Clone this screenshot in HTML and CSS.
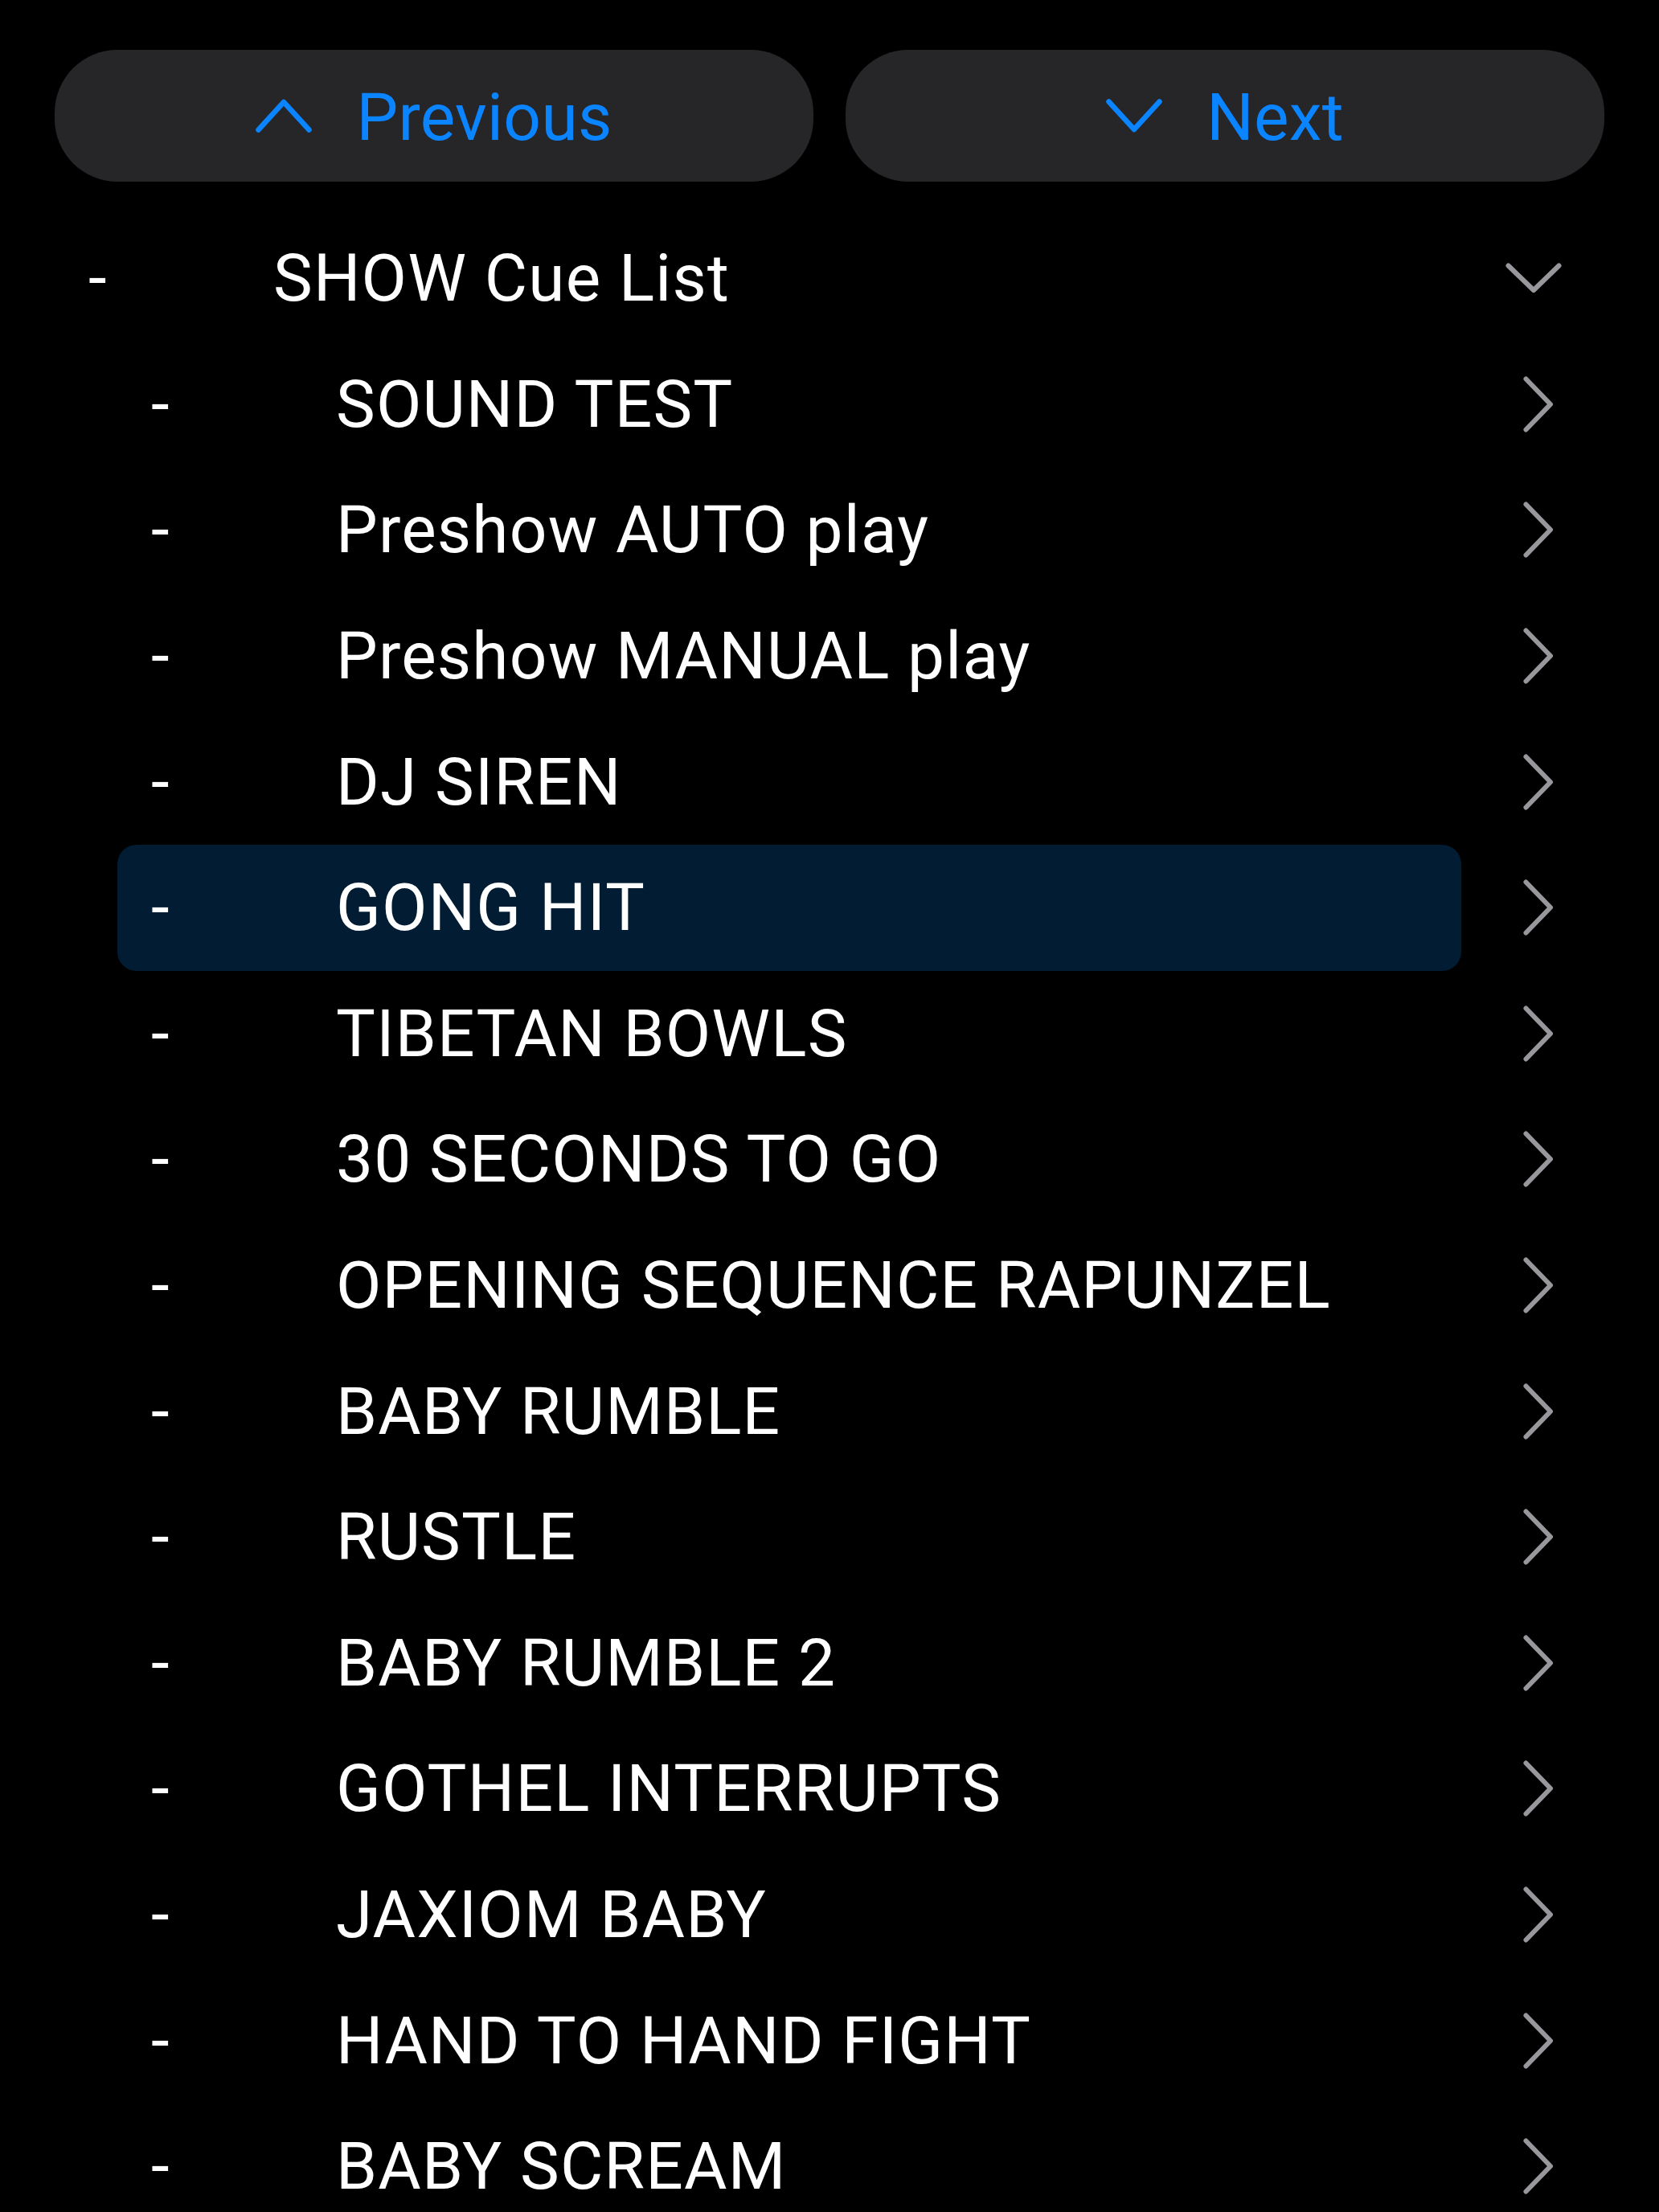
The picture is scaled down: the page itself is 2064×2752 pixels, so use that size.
FILE: index.html
```html
<!DOCTYPE html>
<html lang="en">
<head>
<meta charset="utf-8">
<title>SHOW Cue List</title>
<link rel="stylesheet" href="styles.css">
</head>
<body>
<div class="screen">
  <div class="nav">
    <button class="navbtn">
      <svg class="navchev" viewBox="0 0 70 42" width="70" height="42"><polyline points="3.5,38.5 35,4 66.5,38.5"/></svg>
      <span class="navlabel">Previous</span>
    </button>
    <button class="navbtn">
      <svg class="navchev" viewBox="0 0 70 42" width="70" height="42"><polyline points="3.5,3.5 35,38 66.5,3.5"/></svg>
      <span class="navlabel">Next</span>
    </button>
  </div>

  <div class="list">
    <div class="row lvl0">
      <div class="cell"><span class="dash">-</span><span class="label">SHOW Cue List</span></div>
      <div class="chev down"><svg viewBox="0 0 70 38" width="70" height="38"><polyline points="3.5,3.5 35,34 66.5,3.5"/></svg></div>
    </div>
    <div class="row lvl1">
      <div class="cell"><span class="dash">-</span><span class="label">SOUND TEST</span></div>
      <div class="chev"><svg viewBox="0 0 40 70" width="40" height="70"><polyline points="3.5,3.5 34,35 3.5,66.5"/></svg></div>
    </div>
    <div class="row lvl1">
      <div class="cell"><span class="dash">-</span><span class="label">Preshow AUTO play</span></div>
      <div class="chev"><svg viewBox="0 0 40 70" width="40" height="70"><polyline points="3.5,3.5 34,35 3.5,66.5"/></svg></div>
    </div>
    <div class="row lvl1">
      <div class="cell"><span class="dash">-</span><span class="label">Preshow MANUAL play</span></div>
      <div class="chev"><svg viewBox="0 0 40 70" width="40" height="70"><polyline points="3.5,3.5 34,35 3.5,66.5"/></svg></div>
    </div>
    <div class="row lvl1">
      <div class="cell"><span class="dash">-</span><span class="label">DJ SIREN</span></div>
      <div class="chev"><svg viewBox="0 0 40 70" width="40" height="70"><polyline points="3.5,3.5 34,35 3.5,66.5"/></svg></div>
    </div>
    <div class="row lvl1">
      <div class="cell selected"><span class="dash">-</span><span class="label">GONG HIT</span></div>
      <div class="chev"><svg viewBox="0 0 40 70" width="40" height="70"><polyline points="3.5,3.5 34,35 3.5,66.5"/></svg></div>
    </div>
    <div class="row lvl1">
      <div class="cell"><span class="dash">-</span><span class="label">TIBETAN BOWLS</span></div>
      <div class="chev"><svg viewBox="0 0 40 70" width="40" height="70"><polyline points="3.5,3.5 34,35 3.5,66.5"/></svg></div>
    </div>
    <div class="row lvl1">
      <div class="cell"><span class="dash">-</span><span class="label">30 SECONDS TO GO</span></div>
      <div class="chev"><svg viewBox="0 0 40 70" width="40" height="70"><polyline points="3.5,3.5 34,35 3.5,66.5"/></svg></div>
    </div>
    <div class="row lvl1">
      <div class="cell"><span class="dash">-</span><span class="label">OPENING SEQUENCE RAPUNZEL</span></div>
      <div class="chev"><svg viewBox="0 0 40 70" width="40" height="70"><polyline points="3.5,3.5 34,35 3.5,66.5"/></svg></div>
    </div>
    <div class="row lvl1">
      <div class="cell"><span class="dash">-</span><span class="label">BABY RUMBLE</span></div>
      <div class="chev"><svg viewBox="0 0 40 70" width="40" height="70"><polyline points="3.5,3.5 34,35 3.5,66.5"/></svg></div>
    </div>
    <div class="row lvl1">
      <div class="cell"><span class="dash">-</span><span class="label">RUSTLE</span></div>
      <div class="chev"><svg viewBox="0 0 40 70" width="40" height="70"><polyline points="3.5,3.5 34,35 3.5,66.5"/></svg></div>
    </div>
    <div class="row lvl1">
      <div class="cell"><span class="dash">-</span><span class="label">BABY RUMBLE 2</span></div>
      <div class="chev"><svg viewBox="0 0 40 70" width="40" height="70"><polyline points="3.5,3.5 34,35 3.5,66.5"/></svg></div>
    </div>
    <div class="row lvl1">
      <div class="cell"><span class="dash">-</span><span class="label">GOTHEL INTERRUPTS</span></div>
      <div class="chev"><svg viewBox="0 0 40 70" width="40" height="70"><polyline points="3.5,3.5 34,35 3.5,66.5"/></svg></div>
    </div>
    <div class="row lvl1">
      <div class="cell"><span class="dash">-</span><span class="label">JAXIOM BABY</span></div>
      <div class="chev"><svg viewBox="0 0 40 70" width="40" height="70"><polyline points="3.5,3.5 34,35 3.5,66.5"/></svg></div>
    </div>
    <div class="row lvl1">
      <div class="cell"><span class="dash">-</span><span class="label">HAND TO HAND FIGHT</span></div>
      <div class="chev"><svg viewBox="0 0 40 70" width="40" height="70"><polyline points="3.5,3.5 34,35 3.5,66.5"/></svg></div>
    </div>
    <div class="row lvl1">
      <div class="cell"><span class="dash">-</span><span class="label">BABY SCREAM</span></div>
      <div class="chev"><svg viewBox="0 0 40 70" width="40" height="70"><polyline points="3.5,3.5 34,35 3.5,66.5"/></svg></div>
    </div>
  </div>
</div>
</body>
</html>
```

FILE: styles.css
```css
html, body {
  margin: 0;
  padding: 0;
  background: #000;
  overflow: hidden;
}

.screen {
  width: 2064px;
  height: 2752px;
  overflow: hidden;
  background: #000;
  font-family: Roboto, "Liberation Sans", Arial, sans-serif;
  color: #fff;
  padding: 62px 68px 0 68px;
  box-sizing: border-box;
}

.nav {
  display: flex;
  gap: 40px;
}

.navbtn {
  flex: 1;
  height: 164px;
  border: none;
  border-radius: 78px;
  background: #262628;
  display: flex;
  align-items: center;
  justify-content: center;
  gap: 55px;
  padding: 0;
  font-family: inherit;
  cursor: pointer;
}

.navchev {
  display: block;
  fill: none;
  stroke: #0a84ff;
  stroke-width: 6.5;
  stroke-linecap: round;
  stroke-linejoin: round;
}

.navlabel {
  font-size: 82px;
  color: #0a84ff;
  line-height: 1;
  padding-top: 4px;
  letter-spacing: 0.3px;
}

.list {
  margin-top: 42px;
}

.row {
  display: flex;
  height: 156.6px;
}

.row.lvl1 {
  margin-left: 78px;
}

.cell {
  flex: 1;
  display: flex;
  align-items: center;
  padding-left: 42px;
  border-radius: 24px;
  font-size: 82px;
  white-space: nowrap;
}

.cell.selected {
  background: #011c33;
}

.dash {
  width: 230px;
  flex: none;
}

.label {
  letter-spacing: 1.2px;
}

.chev {
  width: 178px;
  flex: none;
  display: flex;
  align-items: center;
  justify-content: flex-end;
  padding-right: 61px;
  box-sizing: border-box;
}

.chev.down {
  padding-right: 53px;
}

.chev svg {
  display: block;
  fill: none;
  stroke: #97979c;
  stroke-width: 6;
  stroke-linecap: round;
  stroke-linejoin: round;
}
```
